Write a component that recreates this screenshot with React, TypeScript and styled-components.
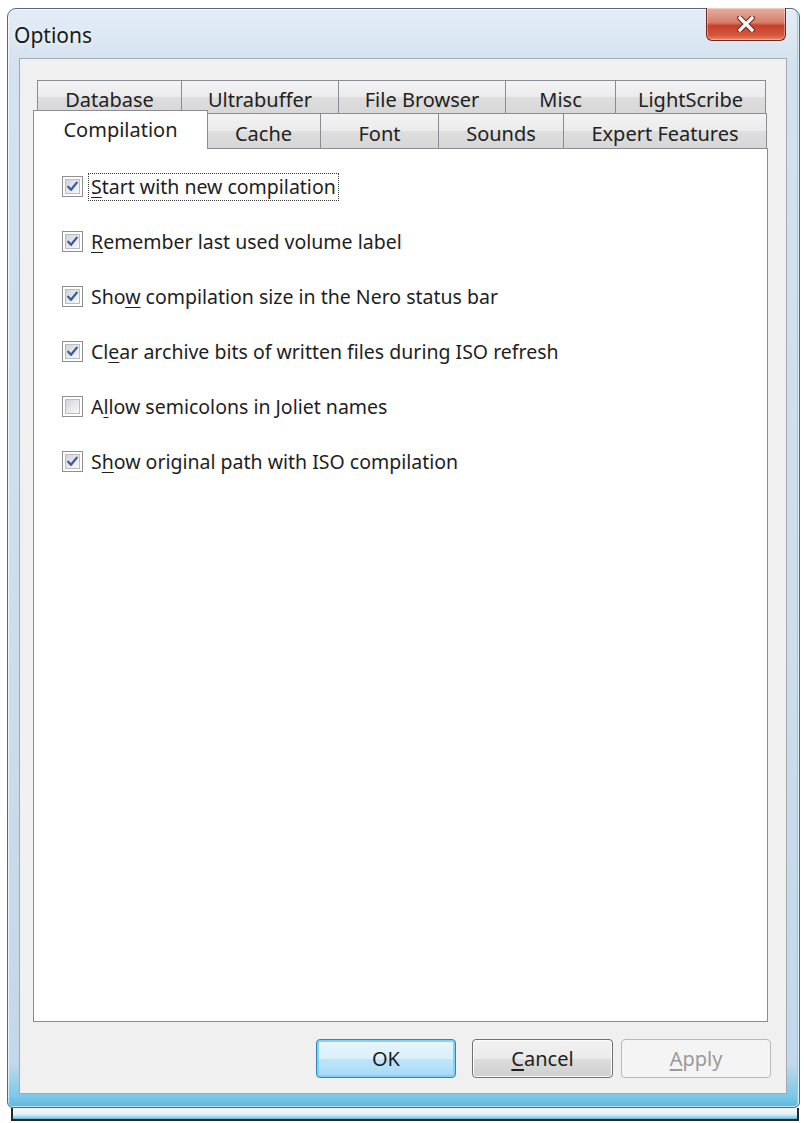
import React from "react";
import styled, { createGlobalStyle } from "styled-components";

const GlobalStyle = createGlobalStyle`
  html, body {
    margin: 0;
    padding: 0;
    background: #ffffff;
  }
  body {
    font-family: "Noto Sans", "Open Sans", sans-serif;
    color: #1e1e1e;
  }
`;

const Page = styled.div`
  width: 804px;
  height: 1123px;
  box-sizing: border-box;
  padding: 8px 0 0 7px;
  overflow: hidden;
`;

const Window = styled.div`
  width: 793px;
  height: 1100px;
  box-sizing: border-box;
  border: 1px solid #56687a;
  border-radius: 9px 9px 6px 6px;
  background: linear-gradient(
    180deg,
    #e4edf6 0%,
    #d4e2ef 5%,
    #cfdeec 50%,
    #c3d8ea 96%,
    #7cc8e8 99%,
    #5ab7e0 100%
  );
  box-shadow: inset 0 0 0 1px rgba(255, 255, 255, 0.65),
    inset -4px 0 0 -2px #8fd0ec;
  display: flex;
  flex-direction: column;
`;

const TitleBar = styled.div`
  height: 49px;
  display: flex;
  justify-content: space-between;
  align-items: flex-start;
  padding-left: 6px;
  flex-shrink: 0;
`;

const Title = styled.div`
  padding-top: 14px;
  font-size: 21px;
  line-height: 24px;
  color: #1a1a1a;
  text-shadow: 0 0 6px rgba(255, 255, 255, 0.9);
`;

const CloseButton = styled.div`
  width: 80px;
  height: 33px;
  margin: -1px 13px 0 0;
  box-sizing: border-box;
  border: 1px solid #6b2a22;
  border-top: none;
  border-radius: 0 0 6px 6px;
  background: linear-gradient(
    180deg,
    #e6b0a2 0%,
    #d87d6c 45%,
    #c8402a 55%,
    #d4563c 85%,
    #e58a6c 100%
  );
  box-shadow: inset 0 0 0 1px rgba(255, 255, 255, 0.35);
  display: flex;
  align-items: center;
  justify-content: center;
`;

const Client = styled.div`
  flex: 1;
  margin: 0 12px 13px 11px;
  border: 1px solid #a3a9b1;
  background: #f0f0f0;
  display: flex;
  flex-direction: column;
  padding: 21px 18px 0 13px;
  min-height: 0;
`;

const TabRow = styled.div<{ $offset: number; $height: number }>`
  display: flex;
  height: ${({ $height }) => $height}px;
  margin-left: ${({ $offset }) => $offset}px;
  margin-right: 3px;
  flex-shrink: 0;
`;

const Tab = styled.div<{ $width: number; $active?: boolean }>`
  position: relative;
  box-sizing: border-box;
  flex: 0 0 ${({ $width }) => $width}px;
  margin-left: -1px;
  border: 1px solid #898c95;
  border-bottom: none;
  background: linear-gradient(180deg, #f3f3f3 0%, #ebebeb 50%, #dedede 51%, #d7d7d7 100%);
  font-size: 20px;
  display: flex;
  align-items: center;
  justify-content: center;
  padding-top: 4px;
  color: #222;

  &:first-child {
    margin-left: 0;
  }

  ${({ $active, $width }) =>
    $active &&
    `
    flex: 0 0 ${$width + 4}px;
    margin: -3px -1px -1px -2px;
    background: #ffffff;
    z-index: 2;
    align-items: flex-start;
    padding-top: 5px;
    &:first-child { margin-left: -2px; }
  `}
`;

const Panel = styled.div`
  flex: 1;
  border: 1px solid #898c95;
  background: #ffffff;
  padding: 10px 0 0 28px;
  min-height: 0;
`;

const OptionRow = styled.div`
  height: 55px;
  display: flex;
  align-items: center;
`;

const Box = styled.div`
  width: 21px;
  height: 21px;
  box-sizing: border-box;
  border: 1px solid #8f8f8f;
  padding: 2px;
  background: #ffffff;
  flex-shrink: 0;
`;

const BoxInner = styled.div`
  width: 100%;
  height: 100%;
  box-sizing: border-box;
  border: 1px solid #b8bcc4;
  background: linear-gradient(135deg, #cfd3da 0%, #e8e9ec 55%, #f8f8f8 100%);
  display: flex;
  align-items: center;
  justify-content: center;
`;

const Label = styled.span<{ $focused?: boolean }>`
  margin-left: 5px;
  padding: 1px 2px;
  font-size: 19.5px;
  line-height: 24px;
  color: #1e1e1e;
  border: 1px dotted ${({ $focused }) => ($focused ? "#3a3a3a" : "transparent")};
`;

const Key = styled.span`
  text-decoration: underline;
  text-underline-offset: 3px;
`;

const ButtonRow = styled.div`
  height: 71px;
  box-sizing: border-box;
  padding: 17px 0 15px;
  margin-right: -3px;
  display: flex;
  justify-content: flex-end;
  flex-shrink: 0;
`;

const Button = styled.div<{ $width: number; $gap: number; $kind: "default" | "normal" | "disabled" }>`
  width: ${({ $width }) => $width}px;
  margin-left: ${({ $gap }) => $gap}px;
  box-sizing: border-box;
  border-radius: 4px;
  font-size: 20px;
  display: flex;
  align-items: center;
  justify-content: center;
  ${({ $kind }) =>
    $kind === "default"
      ? `
    border: 1px solid #3c7fb1;
    background: linear-gradient(180deg, #eaf6fd 0%, #d9f0fc 50%, #bee6fd 51%, #a7d9f5 100%);
    box-shadow: inset 0 0 0 2px #7fd3f5;
    color: #1e1e1e;
  `
      : $kind === "normal"
      ? `
    border: 1px solid #707070;
    background: linear-gradient(180deg, #f2f2f2 0%, #ebebeb 50%, #dddddd 51%, #cfcfcf 100%);
    box-shadow: inset 0 0 0 1px #fcfcfc;
    color: #1e1e1e;
  `
      : `
    border: 1px solid #b5b9bc;
    background: #f4f4f4;
    color: #9a9a9a;
  `}
`;

const GhostEdge = styled.div`
  width: 788px;
  height: 13px;
  margin-left: 4px;
  box-sizing: border-box;
  border: 2px solid #1b2a30;
  border-top: none;
  background: linear-gradient(180deg, #eef6fa 0%, #e6f2f8 55%, #9fd8ee 80%, #5db8dc 100%);
`;

const topTabs = [
  { label: "Database", width: 145 },
  { label: "Ultrabuffer", width: 158 },
  { label: "File Browser", width: 168 },
  { label: "Misc", width: 111 },
  { label: "LightScribe", width: 151 },
];

const bottomTabs = [
  { label: "Compilation", width: 171, active: true },
  { label: "Cache", width: 115 },
  { label: "Font", width: 119 },
  { label: "Sounds", width: 126 },
  { label: "Expert Features", width: 204 },
];

const options: { before: string; key: string; after: string; checked: boolean }[] = [
  { before: "", key: "S", after: "tart with new compilation", checked: true },
  { before: "", key: "R", after: "emember last used volume label", checked: true },
  { before: "Sho", key: "w", after: " compilation size in the Nero status bar", checked: true },
  { before: "Cl", key: "e", after: "ar archive bits of written files during ISO refresh", checked: true },
  { before: "A", key: "l", after: "low semicolons in Joliet names", checked: false },
  { before: "S", key: "h", after: "ow original path with ISO compilation", checked: true },
];

function CheckMark() {
  return (
    <svg width="13" height="13" viewBox="0 0 13 13">
      <path
        d="M2.2 6.8 L5 9.8 L10.8 2.6"
        fill="none"
        stroke="#3d5a9c"
        strokeWidth="2.3"
        strokeLinecap="round"
        strokeLinejoin="round"
      />
    </svg>
  );
}

function CloseGlyph() {
  return (
    <svg width="18" height="16" viewBox="0 0 18 16">
      <path d="M3 2 L15 14 M15 2 L3 14" stroke="#7a2b20" strokeWidth="5.5" strokeLinecap="square" />
      <path d="M3 2 L15 14 M15 2 L3 14" stroke="#ffffff" strokeWidth="3.2" strokeLinecap="square" />
    </svg>
  );
}

export default function App() {
  return (
    <Page>
      <GlobalStyle />
      <Window>
        <TitleBar>
          <Title>Options</Title>
          <CloseButton>
            <CloseGlyph />
          </CloseButton>
        </TitleBar>
        <Client>
          <TabRow $offset={4} $height={33}>
            {topTabs.map((t) => (
              <Tab key={t.label} $width={t.width}>
                {t.label}
              </Tab>
            ))}
          </TabRow>
          <TabRow $offset={2} $height={35}>
            {bottomTabs.map((t) => (
              <Tab key={t.label} $width={t.width} $active={t.active}>
                {t.label}
              </Tab>
            ))}
          </TabRow>
          <Panel>
            {options.map((o, i) => (
              <OptionRow key={i}>
                <Box>
                  <BoxInner>{o.checked && <CheckMark />}</BoxInner>
                </Box>
                <Label $focused={i === 0}>
                  {o.before}
                  <Key>{o.key}</Key>
                  {o.after}
                </Label>
              </OptionRow>
            ))}
          </Panel>
          <ButtonRow>
            <Button $width={140} $gap={0} $kind="default">
              OK
            </Button>
            <Button $width={141} $gap={16} $kind="normal">
              <span>
                <Key>C</Key>ancel
              </span>
            </Button>
            <Button $width={150} $gap={8} $kind="disabled">
              <span>
                <Key>A</Key>pply
              </span>
            </Button>
          </ButtonRow>
        </Client>
      </Window>
      <GhostEdge />
    </Page>
  );
}
